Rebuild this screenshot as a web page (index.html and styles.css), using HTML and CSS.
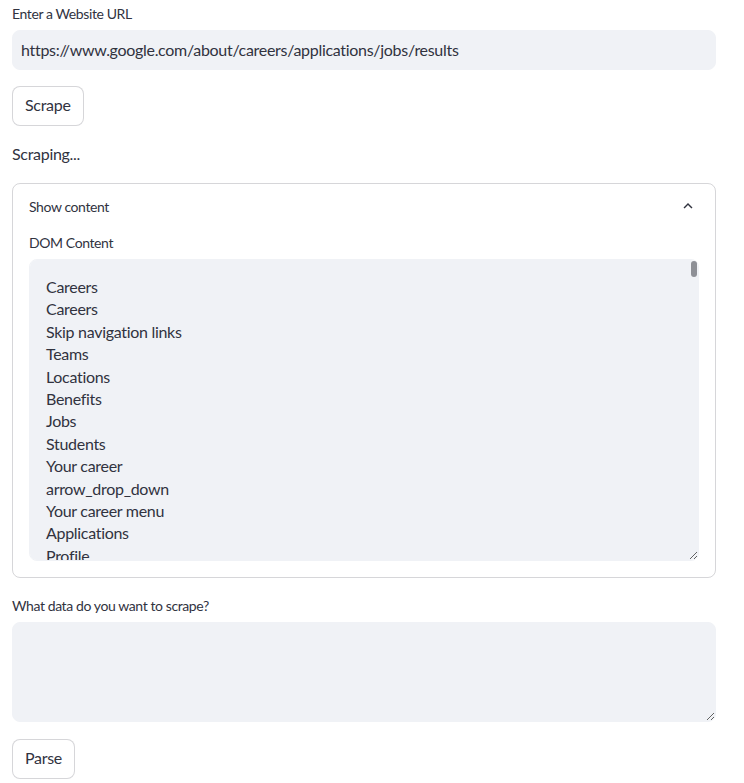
FILE: index.html
```html
<!DOCTYPE html>
<html lang="en">
<head>
<meta charset="utf-8">
<title>AI Web Scraper</title>
<link rel="stylesheet" href="styles.css">
</head>
<body>
<main class="app">
  <label class="field-label first" for="url">Enter a Website URL</label>
  <input id="url" class="text-input" type="text" value="https://www.google.com/about/careers/applications/jobs/results">
  <button class="btn btn-scrape" type="button">Scrape</button>
  <p class="status">Scraping...</p>
  <section class="expander">
    <div class="expander-header">
      <span>Show content</span>
      <svg class="chevron" viewBox="0 0 24 24" width="18" height="18" aria-hidden="true"><path d="M12 8l-6 6 1.41 1.41L12 10.83l4.59 4.58L18 14z" fill="#31333f"/></svg>
    </div>
    <div class="expander-body">
      <label class="field-label inner" for="dom">DOM Content</label>
      <div class="dom-wrap">
      <textarea id="dom" class="dom-area" readonly>
Careers
Careers
Skip navigation links
Teams
Locations
Benefits
Jobs
Students
Your career
arrow_drop_down
Your career menu
Applications
Profile
Job alerts
Saved jobs
Resources
Sign in
Jobs search results
Search
search
Search jobs
close
Clear search
Filters
filter_list
Sort by
Relevance
Date
Location
Experience level
Skills &amp; qualifications
Degree
Job types
Organizations
Remote eligible
Software Engineer III, Infrastructure, Core
Google
place
Mountain View, CA, USA
bar_chart
Mid
Minimum qualifications
Bachelor's degree or equivalent practical experience.
2 years of experience with software development.
Learn more
share
bookmark
Software Engineer, Early Career
Google
place
New York, NY, USA
bar_chart
Early
Minimum qualifications
Bachelor's degree or equivalent practical experience.
Experience with one or more programming languages.
Learn more
share
bookmark
Product Manager, Cloud AI
Google
place
Sunnyvale, CA, USA
bar_chart
Advanced
Minimum qualifications
Bachelor's degree or equivalent practical experience.
5 years of experience in product management.
Learn more
share
bookmark
Data Scientist, Research
Google
place
Seattle, WA, USA
bar_chart
Mid
Minimum qualifications
Master's degree in a quantitative discipline.
3 years of experience with statistical analysis.
Learn more
share
bookmark
UX Designer, Search
Google
place
London, UK
bar_chart
Mid
Minimum qualifications
Bachelor's degree in Design or equivalent experience.
4 years of experience in UX design.
Learn more
share
bookmark
Site Reliability Engineer
Google
place
Zurich, Switzerland
bar_chart
Mid
Minimum qualifications
Bachelor's degree or equivalent practical experience.
2 years of experience with Linux systems.
Learn more
share
bookmark
Technical Program Manager
Google
place
Bengaluru, Karnataka, India
bar_chart
Advanced
Minimum qualifications
Bachelor's degree in a technical field.
5 years of experience in program management.
Learn more
share
bookmark
Account Executive, Google Cloud
Google
place
Chicago, IL, USA
bar_chart
Mid
Minimum qualifications
Bachelor's degree or equivalent practical experience.
7 years of experience in sales.
Learn more
share
bookmark
Items per page
20
1 - 20 of 3,412
chevron_left
chevron_right
Follow Life at Google
Google
About Google
Google products
Privacy
Terms
Help
English
</textarea>
      <span class="scroll-thumb" aria-hidden="true"></span>
      </div>
    </div>
  </section>
  <label class="field-label after" for="ask">What data do you want to scrape?</label>
  <textarea id="ask" class="ask-area"></textarea>
  <button class="btn btn-parse" type="button">Parse</button>
</main>
</body>
</html>
```
FILE: styles.css
```css
* { box-sizing: border-box; }

html, body {
  margin: 0;
  padding: 0;
  background: #ffffff;
}

body {
  font-family: "Source Sans Pro", Lato, "Noto Sans", sans-serif;
  color: #31333f;
  font-size: 16px;
  letter-spacing: -0.3px;
}

.app {
  width: 744px;
  padding: 0 28px 0 12px;
  display: flex;
  flex-direction: column;
  align-items: flex-start;
}

.field-label {
  display: block;
  font-size: 14px;
  line-height: 20px;
  height: 20px;
  margin-bottom: 6px;
  color: #31333f;
  letter-spacing: -0.4px;
}

.field-label.first { margin-top: 4px; }
.field-label.inner { margin-top: 3px; }
.field-label.after { margin-top: 18px; }

.text-input {
  width: 100%;
  height: 40px;
  border: 1px solid #f0f2f6;
  border-radius: 8px;
  background: #f0f2f6;
  font-family: inherit;
  font-size: 16px;
  letter-spacing: -0.3px;
  color: #31333f;
  padding: 0 8px 1px;
  outline: none;
}

.btn {
  height: 40px;
  padding: 0 12px 3px;
  background: #ffffff;
  border: 1px solid rgba(49, 51, 63, 0.2);
  border-radius: 8px;
  font-family: inherit;
  font-size: 16px;
  letter-spacing: -0.3px;
  color: #31333f;
  cursor: pointer;
}

.btn-scrape { margin-top: 16px; }
.btn-parse { margin-top: 17px; }

.status {
  margin: 16px 0 0;
  line-height: 24px;
  font-size: 16px;
}

.expander {
  width: 100%;
  margin-top: 17px;
  border: 1px solid rgba(49, 51, 63, 0.2);
  border-radius: 8px;
}

.expander-header {
  display: flex;
  align-items: center;
  justify-content: space-between;
  height: 46px;
  padding: 0 18px 1px 16px;
  font-size: 14px;
  letter-spacing: -0.4px;
}

.chevron { display: block; margin-top: -2px; }

.expander-body {
  padding: 0 16px 16px;
}

.dom-wrap {
  position: relative;
  width: 100%;
}

.dom-area {
  display: block;
  width: 100%;
  height: 302px;
  border: 1px solid #f0f2f6;
  border-radius: 8px;
  background: #f0f2f6;
  padding: 16px;
  font-family: inherit;
  font-size: 16px;
  letter-spacing: -0.3px;
  line-height: 22.4px;
  color: #31333f;
  resize: vertical;
  outline: none;
  overflow-y: scroll;
}

.scroll-thumb {
  position: absolute;
  top: 2px;
  right: 2px;
  width: 6px;
  height: 16px;
  border-radius: 3px;
  background: #8e9096;
}

.ask-area {
  display: block;
  width: 100%;
  height: 100px;
  border: 1px solid #f0f2f6;
  border-radius: 8px;
  background: #f0f2f6;
  padding: 16px;
  font-family: inherit;
  font-size: 16px;
  color: #31333f;
  resize: vertical;
  outline: none;
}
```
